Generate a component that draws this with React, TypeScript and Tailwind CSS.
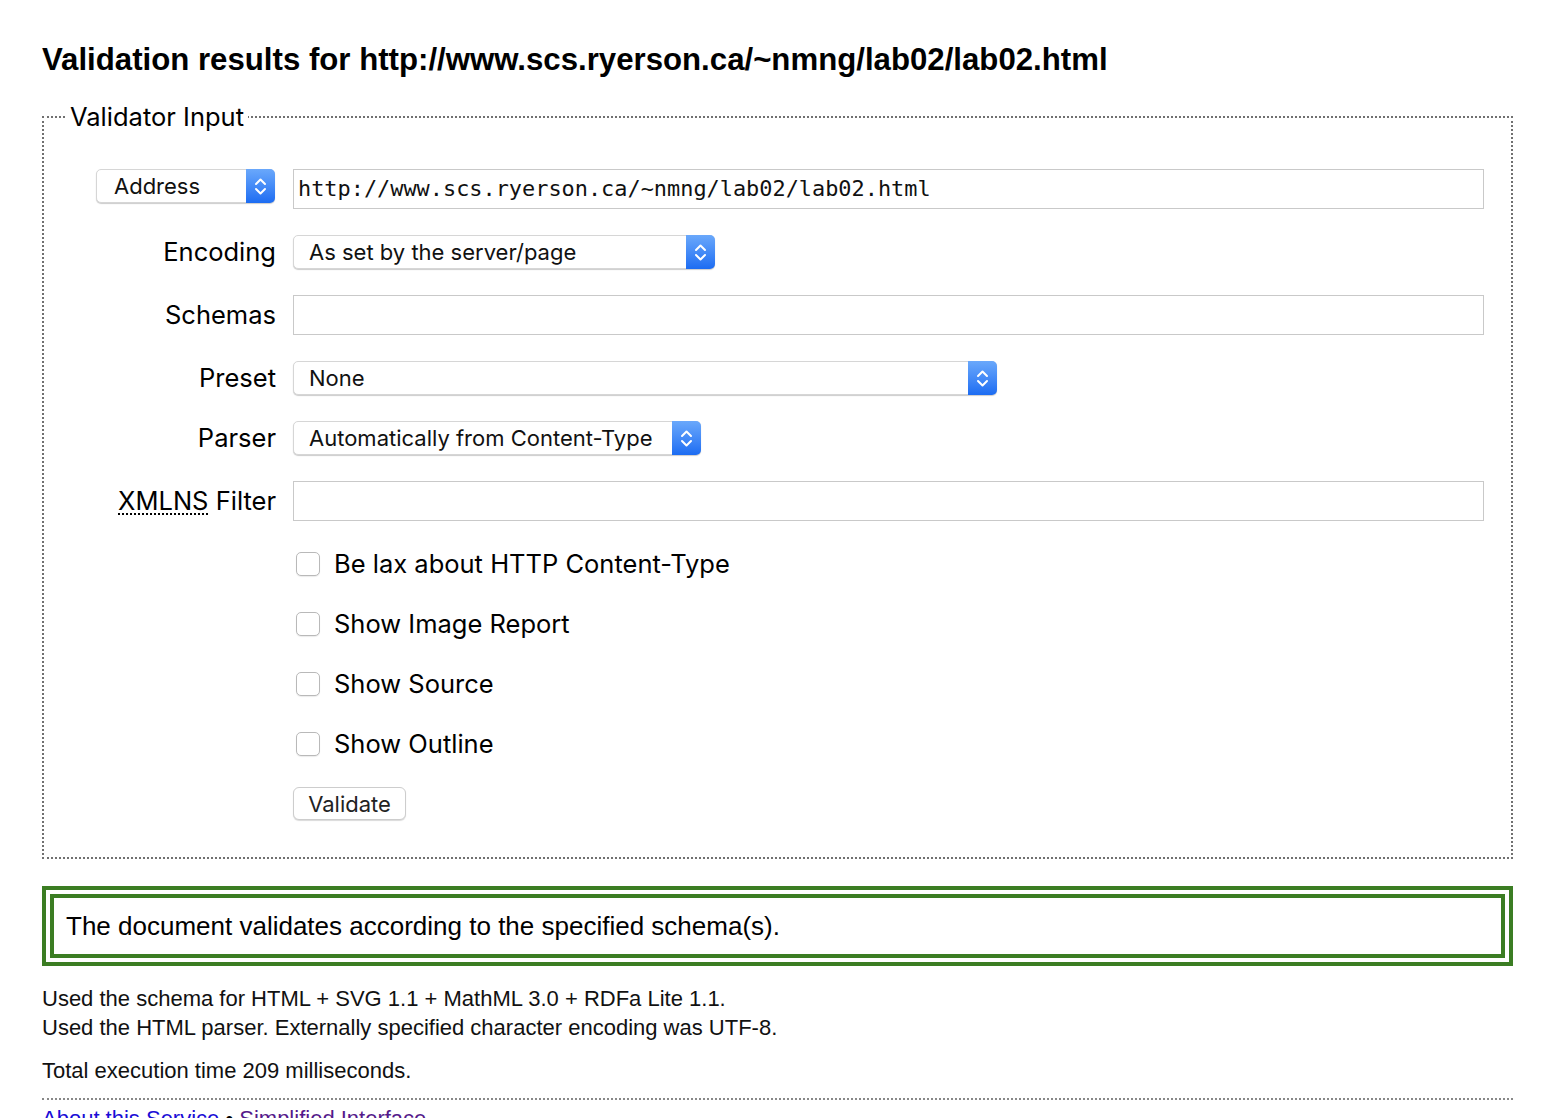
import type { ReactNode } from 'react';

const ui = "font-['Inter','Noto_Sans',sans-serif]";

function Chevrons() {
  return (
    <svg width="13" height="21" viewBox="0 0 13 21" fill="none" stroke="white" strokeWidth="2" strokeLinecap="round" strokeLinejoin="round">
      <path d="M2 8 6.5 3.5 11 8" />
      <path d="M2 13 6.5 17.5 11 13" />
    </svg>
  );
}

function Select({ value, width, pad = 'pl-[15px]' }: { value: string; width: string; pad?: string }) {
  return (
    <div
      className={`flex h-[34px] ${width} items-stretch rounded-[5px] border border-[#d6d6d6] bg-white shadow-[0_1px_1px_rgba(0,0,0,0.2)]`}
    >
      <div className={`flex flex-1 items-center ${pad} text-[22px] leading-none text-[#111] ${ui}`}>{value}</div>
      <div className="-my-px -mr-px flex w-[29px] items-center justify-center rounded-r-[5px] bg-gradient-to-b from-[#6aa8fb] to-[#1c6cf2]">
        <Chevrons />
      </div>
    </div>
  );
}

function TextBox({ value }: { value?: string }) {
  return (
    <div className="flex h-[40px] w-full items-center border border-[#c9c9c9] bg-white px-[4px] font-['DejaVu_Sans_Mono',monospace] text-[21.9px] text-[#111]">
      {value}
    </div>
  );
}

function Row({ label, children }: { label: ReactNode; children: ReactNode }) {
  return (
    <div className="grid grid-cols-[232px_1fr] items-center gap-x-[17px]">
      <div className={`text-right text-[25.5px] leading-[30px] text-black ${ui}`}>{label}</div>
      <div className="flex items-center">{children}</div>
    </div>
  );
}

function Check({ label }: { label: string }) {
  return (
    <div className="grid h-[40px] grid-cols-[232px_1fr] items-center gap-x-[17px]">
      <div />
      <div className="flex items-center">
        <span className="ml-[3px] h-[24px] w-[24px] rounded-[5px] border border-[#b9b9b9] bg-white shadow-[0_1px_1px_rgba(0,0,0,0.08)]" />
        <span className={`ml-[14px] text-[25.5px] leading-[30px] text-black ${ui}`}>{label}</span>
      </div>
    </div>
  );
}

export default function App() {
  return (
    <div className="min-h-screen bg-white pl-[42px] pr-[41px] pt-[39px] font-['Liberation_Sans',Arial,sans-serif] text-black">
      <h1 className="text-[31.2px] font-bold leading-[42px]">
        Validation results for http://www.scs.ryerson.ca/~nmng/lab02/lab02.html
      </h1>

      {/* Validator input */}
      <fieldset className="mt-[21px] border-2 border-dotted border-[#707070] pb-[37px] pr-[27px]">
        <legend className={`ml-[22px] px-[4px] text-[25.5px] leading-[30px] text-black ${ui}`}>Validator Input</legend>

        <div className="mt-[37px] flex flex-col gap-[26px]">
          <div className="grid grid-cols-[232px_1fr] items-start gap-x-[17px]">
            <div className="flex justify-end pr-px">
              <Select value="Address" width="w-[179px]" pad="pl-[17px]" />
            </div>
            <TextBox value="http://www.scs.ryerson.ca/~nmng/lab02/lab02.html" />
          </div>
          <Row label="Encoding">
            <Select value="As set by the server/page" width="w-[422px]" />
          </Row>
          <Row label="Schemas">
            <TextBox />
          </Row>
          <Row label="Preset">
            <Select value="None" width="w-[704px]" />
          </Row>
          <Row label="Parser">
            <Select value="Automatically from Content-Type" width="w-[408px]" />
          </Row>
          <Row
            label={
              <>
                <abbr title="XML namespace" className="underline decoration-dotted decoration-2 underline-offset-[3px]">
                  XMLNS
                </abbr>{' '}
                Filter
              </>
            }
          >
            <TextBox />
          </Row>
        </div>

        <div className="mt-[23px] flex flex-col gap-[20px]">
          <Check label="Be lax about HTTP Content-Type" />
          <Check label="Show Image Report" />
          <Check label="Show Source" />
          <Check label="Show Outline" />
        </div>

        <div className="mt-[23px] grid grid-cols-[232px_1fr] gap-x-[17px]">
          <div />
          <div>
            <button
              className={`h-[33px] w-[113px] rounded-[6px] border border-[#cdcdcd] bg-white text-[22px] leading-none text-[#222] shadow-[0_1px_1px_rgba(0,0,0,0.15)] ${ui}`}
            >
              Validate
            </button>
          </div>
        </div>
      </fieldset>

      {/* Result */}
      <div className="mt-[27px] flex h-[80px] items-center border-[12px] border-double border-[#3b7d23] px-[12px] text-[26px]">
        The document validates according to the specified schema(s).
      </div>

      <div className="mt-[18px] text-[22px] leading-[29px] text-[#111]">
        <p>Used the schema for HTML + SVG 1.1 + MathML 3.0 + RDFa Lite 1.1.</p>
        <p>Used the HTML parser. Externally specified character encoding was UTF-8.</p>
        <p className="mt-[14px]">Total execution time 209 milliseconds.</p>
      </div>

      <div className="mt-[13px] border-t-2 border-dotted border-[#888]" />
      <p className="pt-[4px] text-[22px] leading-[29px]">
        <a href="#" className="text-[#1a0dd6] underline">About this Service</a>
        <span> • </span>
        <a href="#" className="text-[#551a8b] underline">Simplified Interface</a>
      </p>
    </div>
  );
}
